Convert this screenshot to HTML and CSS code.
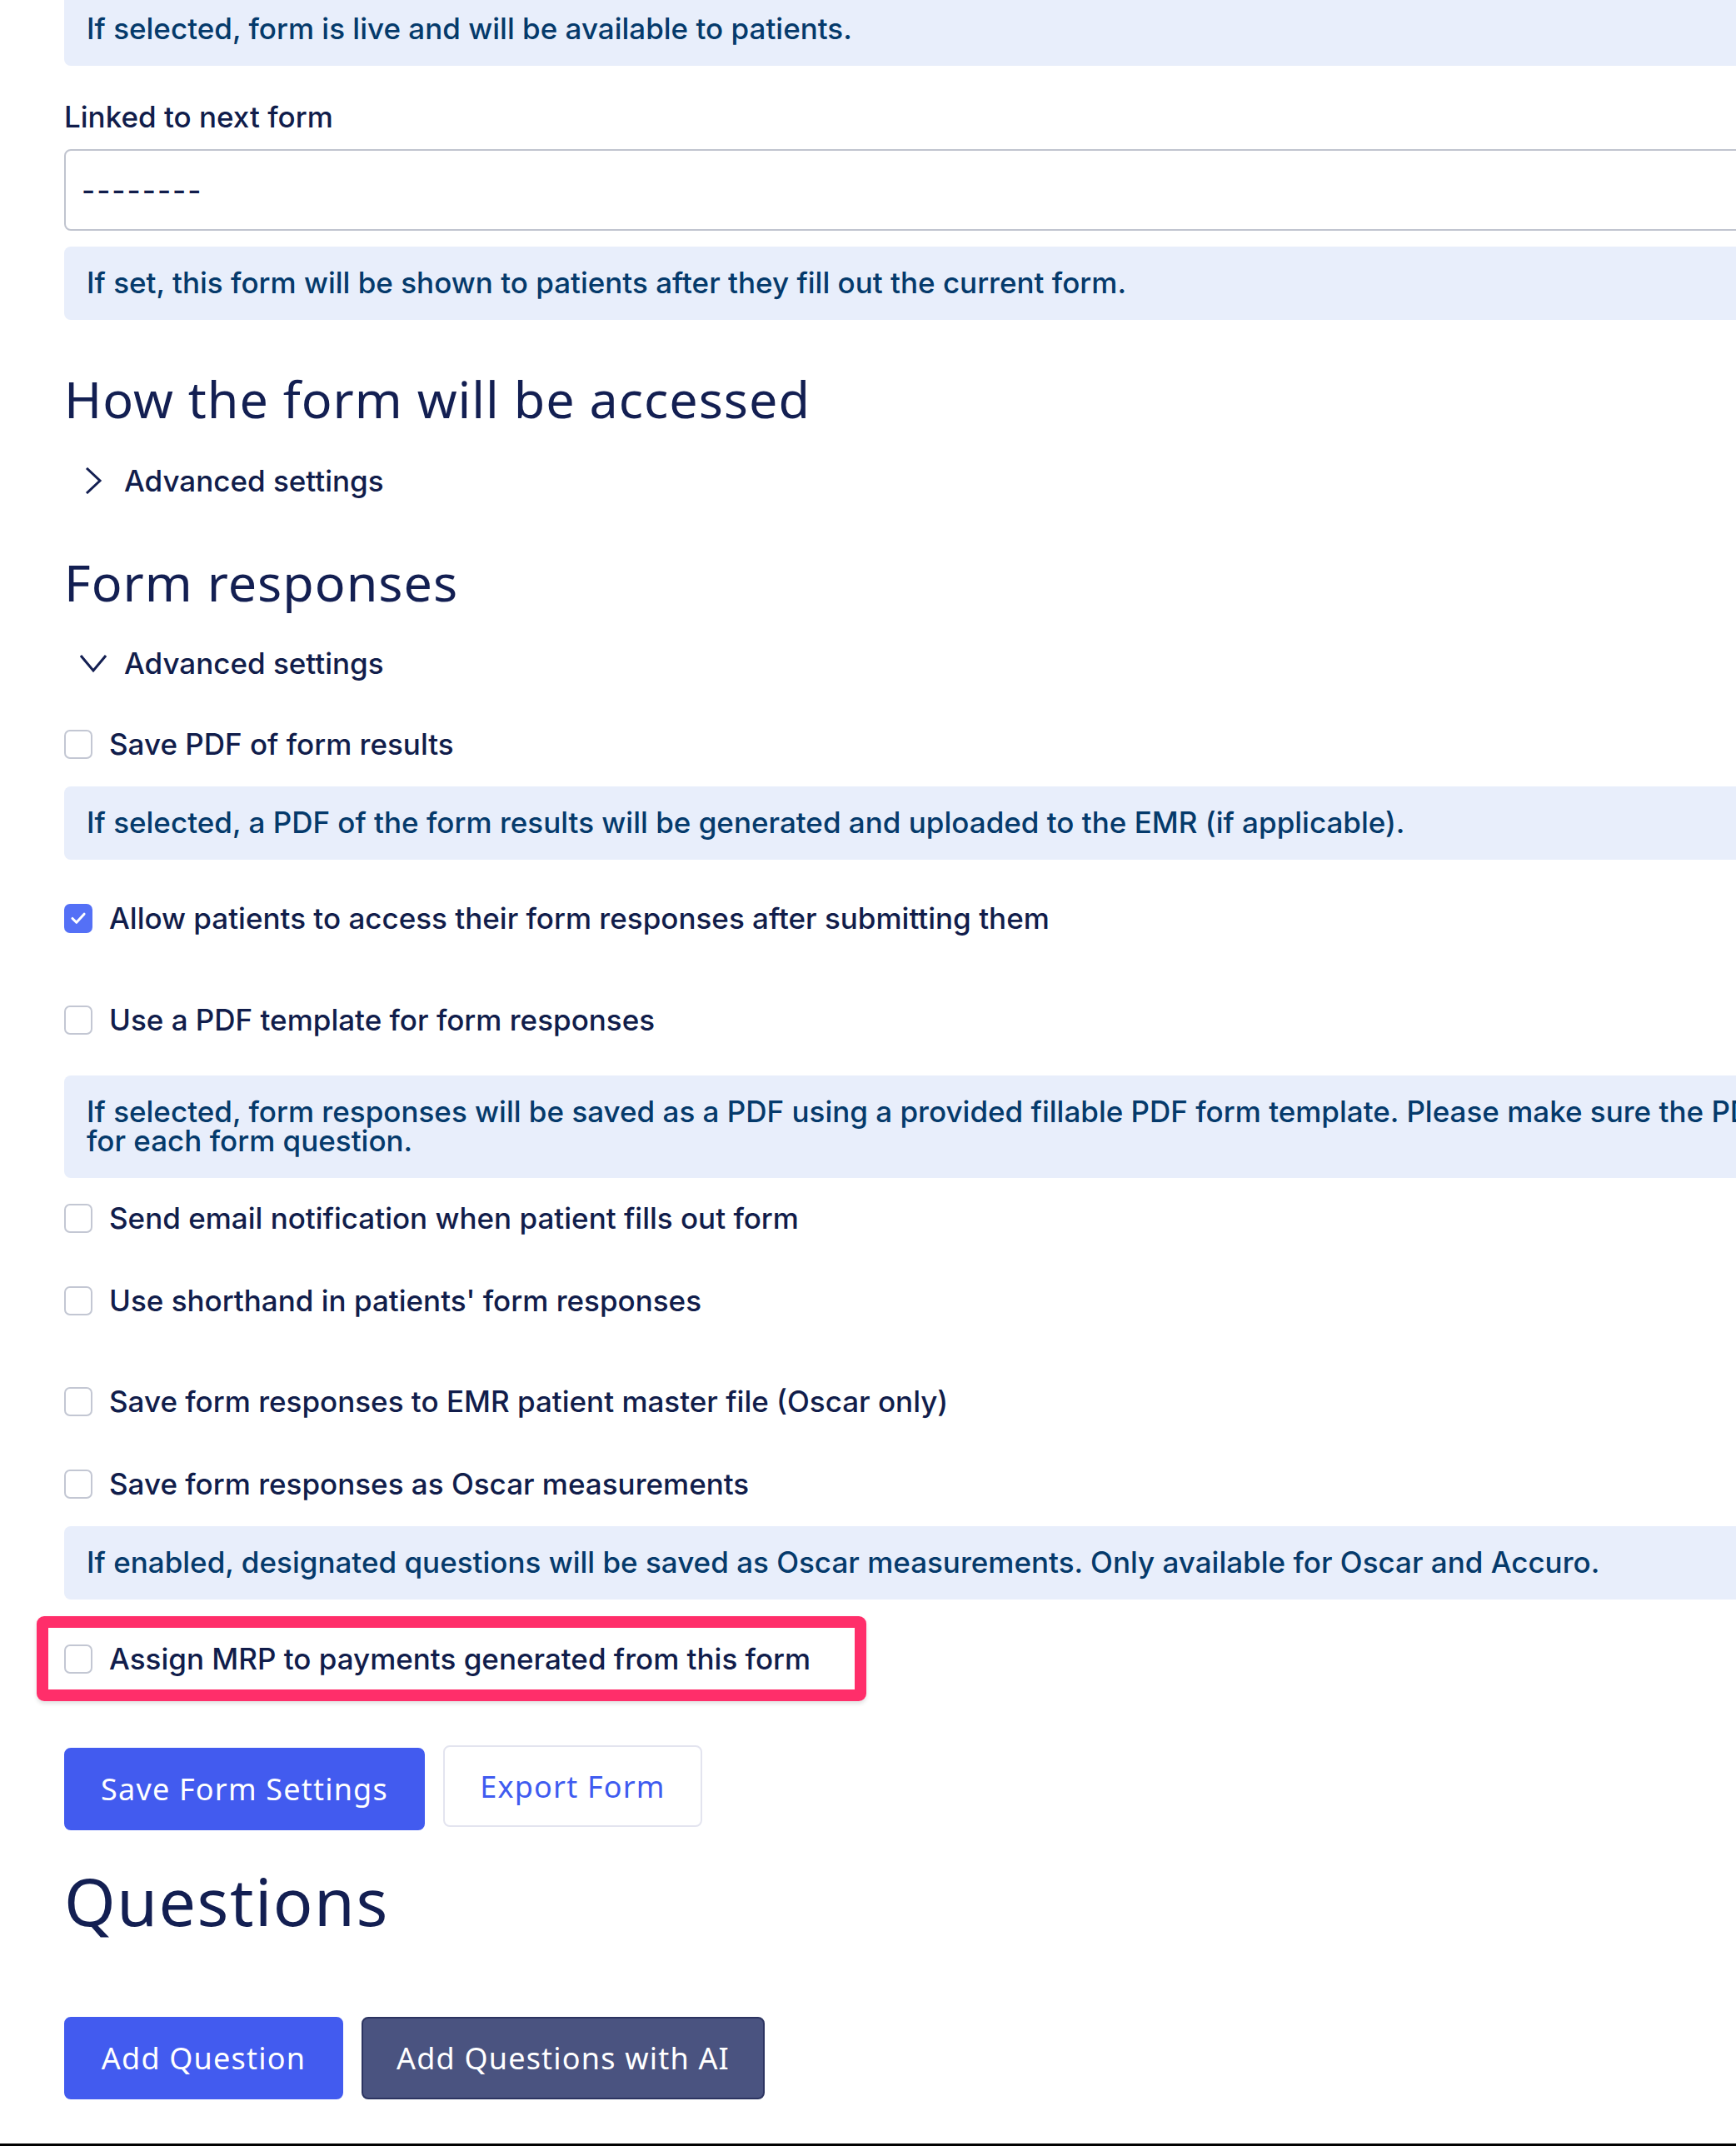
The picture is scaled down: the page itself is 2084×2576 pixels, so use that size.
FILE: index.html
```html
<!DOCTYPE html>
<html lang="en">
<head>
<meta charset="utf-8">
<title>Form settings</title>
<link rel="stylesheet" href="styles.css">
</head>
<body>
<div class="page">
  <main class="content">
    <div class="info info-first">If selected, form is live and will be available to patients.</div>

    <label class="field-label">Linked to next form</label>
    <div class="select">--------</div>
    <div class="info info-after-select">If set, this form will be shown to patients after they fill out the current form.</div>

    <h2 class="section-title title-access">How the form will be accessed</h2>
    <div class="toggle toggle-access">
      <span class="chev">
        <svg width="32" height="32" viewBox="0 0 32 32"><path d="M8 1 L24 16 L8 31" fill="none" stroke="#131f52" stroke-width="3"/></svg>
      </span>
      <span>Advanced settings</span>
    </div>

    <h2 class="section-title title-responses">Form responses</h2>
    <div class="toggle toggle-responses">
      <span class="chev">
        <svg width="32" height="32" viewBox="0 0 32 32"><path d="M1 7 L16 25 L31 7" fill="none" stroke="#131f52" stroke-width="3"/></svg>
      </span>
      <span>Advanced settings</span>
    </div>

    <div class="check-row r-pdf"><span class="box"></span><span>Save PDF of form results</span></div>
    <div class="info info-pdf">If selected, a PDF of the form results will be generated and uploaded to the EMR (if applicable).</div>

    <div class="check-row r-allow"><span class="box checked"><svg width="34" height="34" viewBox="0 0 34 34"><path d="M9 17.5 L14.5 23 L25 11.5" fill="none" stroke="#fff" stroke-width="3.4" stroke-linecap="round" stroke-linejoin="round"/></svg></span><span>Allow patients to access their form responses after submitting them</span></div>

    <div class="check-row r-template"><span class="box"></span><span>Use a PDF template for form responses</span></div>
    <div class="info info-template">If selected, form responses will be saved as a PDF using a provided fillable PDF form template. Please make sure the PDF has a fillable field<br>for each form question.</div>

    <div class="check-row r-email"><span class="box"></span><span>Send email notification when patient fills out form</span></div>
    <div class="check-row r-short"><span class="box"></span><span>Use shorthand in patients' form responses</span></div>
    <div class="check-row r-emr"><span class="box"></span><span>Save form responses to EMR patient master file (Oscar only)</span></div>
    <div class="check-row r-oscar"><span class="box"></span><span>Save form responses as Oscar measurements</span></div>
    <div class="info info-oscar">If enabled, designated questions will be saved as Oscar measurements. Only available for Oscar and Accuro.</div>

    <div class="highlight">
      <div class="check-row"><span class="box"></span><span>Assign MRP to payments generated from this form</span></div>
    </div>

    <div class="btn-row settings-row">
      <button class="btn btn-primary btn-save">Save Form Settings</button>
      <button class="btn btn-outline">Export Form</button>
    </div>

    <h1 class="questions-title">Questions</h1>

    <div class="btn-row questions-row">
      <button class="btn btn-primary">Add Question</button>
      <button class="btn btn-dark">Add Questions with AI</button>
    </div>
  </main>
  <div class="bottom-bar"></div>
</div>
</body>
</html>
```

FILE: styles.css
```css
html, body {
  margin: 0;
  padding: 0;
  width: 2084px;
  height: 2576px;
  overflow: hidden;
  background: #ffffff;
}

.page {
  height: 2576px;
  display: flex;
  flex-direction: column;
}

.content {
  flex: 1;
  width: 2500px;
  padding-left: 77px;
  display: flex;
  flex-direction: column;
  align-items: stretch;
  font-family: "Inter", "Liberation Sans", sans-serif;
  font-weight: 500;
  font-size: 35px;
  line-height: 38px;
  color: #111d4b;
}

.info {
  background: #e8eefb;
  color: #053a6b;
  border-radius: 8px;
  padding: 26px 27px 27px;
  line-height: 35px;
  white-space: nowrap;
}

.info-first { margin-top: -9px; }

.field-label {
  margin-top: 42px;
  display: block;
}

.select {
  margin-top: 20px;
  height: 98px;
  box-sizing: border-box;
  border: 2px solid #c0c4cf;
  border-radius: 8px;
  padding-left: 19px;
  display: flex;
  align-items: center;
  letter-spacing: 2px;
}

.info-after-select { margin-top: 19px; }

.section-title {
  margin: 0;
  font-family: "Noto Sans", sans-serif;
  font-weight: 400;
  font-size: 61px;
  line-height: 72px;
  letter-spacing: 1px;
  color: #131f52;
}

.title-access { margin-top: 59px; }
.title-responses { margin-top: 67px; }

.toggle {
  display: flex;
  align-items: center;
  gap: 21px;
  padding-left: 19px;
}

.toggle-access { margin-top: 43px; }
.toggle-responses { margin-top: 42px; }

.chev {
  width: 32px;
  height: 32px;
  display: flex;
}

.check-row {
  display: flex;
  align-items: center;
  gap: 20px;
}

.box {
  width: 34px;
  height: 35px;
  box-sizing: border-box;
  border: 2px solid #c3c7d3;
  border-radius: 7px;
  background: #fff;
  flex: none;
  display: flex;
  align-items: center;
  justify-content: center;
}

.box.checked {
  background: #5470f6;
  border-color: #5470f6;
}

.r-pdf { margin-top: 59px; }
.info-pdf { margin-top: 32px; }
.r-allow { margin-top: 51px; }
.r-template { margin-top: 84px; }
.info-template { margin-top: 48px; }
.r-email { margin-top: 29px; }
.r-short { margin-top: 61px; }
.r-emr { margin-top: 83px; }
.r-oscar { margin-top: 61px; }
.info-oscar { margin-top: 32px; }

.highlight {
  margin-top: 20px;
  margin-left: -33px;
  width: 996px;
  box-sizing: border-box;
  border: 14px solid #ff2e6a;
  border-radius: 9px;
  padding: 18px 19px;
  box-shadow: 0 3px 5px rgba(0, 0, 0, 0.12);
}

.btn-row {
  display: flex;
  align-items: flex-start;
  gap: 22px;
}

.settings-row { margin-top: 53px; }

.btn {
  font-family: "Noto Sans", sans-serif;
  font-weight: 400;
  font-size: 36px;
  letter-spacing: 1.2px;
  height: 99px;
  border-radius: 8px;
  box-sizing: border-box;
  padding: 0;
  cursor: pointer;
}

.btn-primary {
  background: #425bef;
  border: 2px solid #425bef;
  color: #ffffff;
}

.btn-save { margin-top: 3px; width: 433px; }

.btn-outline {
  background: #ffffff;
  border: 2px solid #e3e4ef;
  color: #3f5bf0;
  width: 311px;
  height: 98px;
}

.btn-dark {
  background: #4a5380;
  border: 2px solid #2c3461;
  color: #ffffff;
  width: 484px;
}

.questions-row .btn-primary { width: 335px; }

.questions-title {
  margin: 39px 0 0 0;
  font-family: "Noto Sans", sans-serif;
  font-weight: 400;
  font-size: 79px;
  line-height: 92px;
  letter-spacing: 1.5px;
  color: #131f52;
}

.questions-row { margin-top: 93px; }

.bottom-bar {
  height: 3px;
  background: #000000;
  flex: none;
}
```
